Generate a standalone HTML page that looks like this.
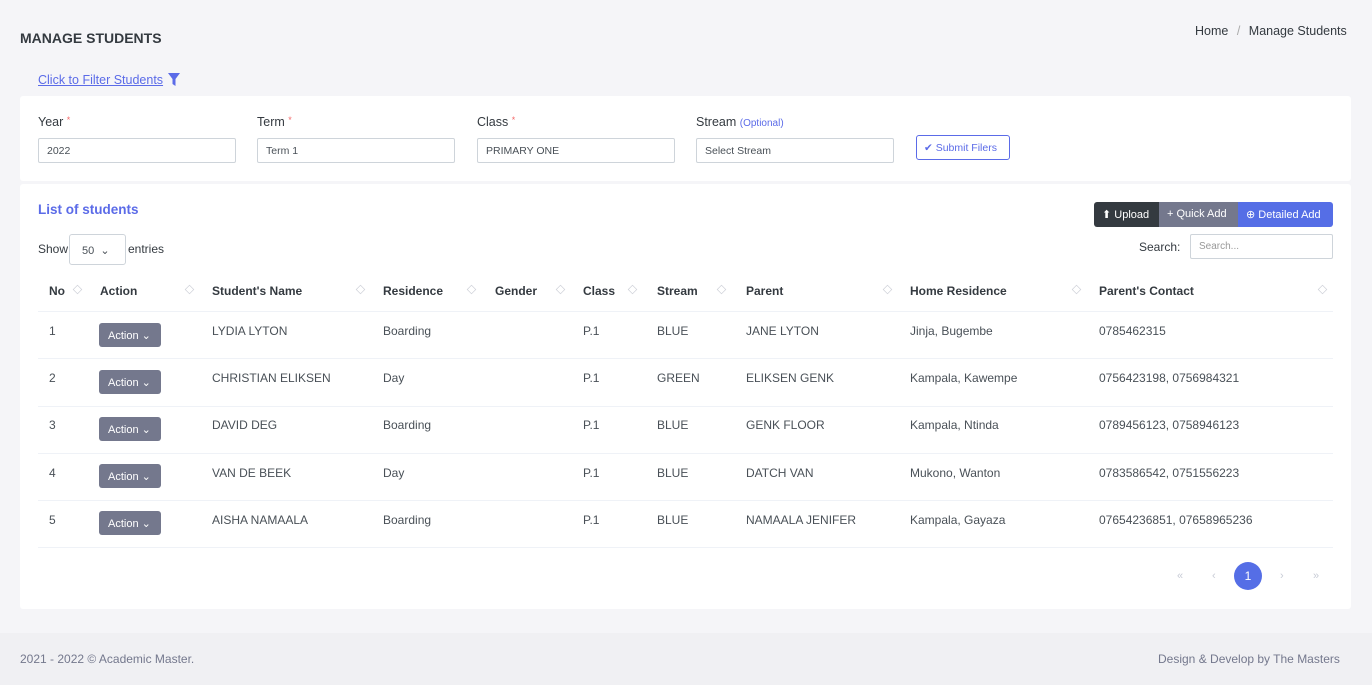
<!DOCTYPE html>
<html><head><meta charset="utf-8"><style>
*{box-sizing:border-box;margin:0;padding:0}
body{width:1372px;height:685px;background:#f5f5f8;font-family:"Liberation Sans",sans-serif;color:#495057;position:relative;overflow:hidden;font-size:12px}
.a{position:absolute;white-space:nowrap}
.card{position:absolute;background:#fff;border-radius:3px}
.inp{position:absolute;height:25px;border:1px solid #ced4da;border-radius:2px;font-size:10.5px;padding:6px 8px;color:#495057;background:#fff}
.lbl{position:absolute;font-size:12.5px;color:#343a40}
.lbl i{color:#f46a6a;font-style:normal;font-size:9px;vertical-align:top}
.th{position:absolute;top:284px;font-weight:bold;font-size:12px;color:#343a40}
.s{position:absolute;top:285px;width:9px;height:9px;border:1.5px solid #d0d3da;transform:rotate(45deg) scale(.75)}
.line{position:absolute;left:38px;width:1295px;height:1px;background:#eff2f7}
.td{position:absolute;font-size:12px;color:#495057}
.btn{position:absolute;left:99px;width:62px;height:24px;background:#74788d;color:#fff;border-radius:3px;font-size:11px;padding:6px 0 0 9px}
</style></head><body>
<div class="a" style="left:20px;top:30px;font-size:14px;font-weight:bold;color:#343a40">MANAGE STUDENTS</div>
<div class="a" style="left:1195px;top:24px;font-size:12.5px;color:#343a40">Home <span style="color:#aaa;margin:0 5px">/</span> Manage Students</div>
<div class="a" style="left:38px;top:73px;font-size:12.5px;color:#5b6be8;text-decoration:underline">Click to Filter Students</div>
<svg class="a" style="left:168px;top:73px" width="12" height="13" viewBox="0 0 12 13"><path d="M0 0H12L7.5 6V13L4.5 11V6Z" fill="#5b6be8"/></svg>
<div class="card" style="left:20px;top:96px;width:1331px;height:85px"></div>
<div class="lbl" style="left:38px;top:115px">Year <i>*</i></div>
<div class="lbl" style="left:257px;top:115px">Term <i>*</i></div>
<div class="lbl" style="left:477px;top:115px">Class <i>*</i></div>
<div class="lbl" style="left:696px;top:115px">Stream <span style="color:#5b6be8;font-size:10px">(Optional)</span></div>
<div class="inp" style="left:38px;top:138px;width:198px">2022</div>
<div class="inp" style="left:257px;top:138px;width:198px">Term 1</div>
<div class="inp" style="left:477px;top:138px;width:198px">PRIMARY ONE</div>
<div class="inp" style="left:696px;top:138px;width:198px">Select Stream</div>
<div class="a" style="left:916px;top:135px;width:94px;height:25px;border:1px solid #5b6be8;border-radius:3px;color:#5b6be8;font-size:10.5px;padding:6px 0 0 7px">✔ Submit Filers</div>
<div class="card" style="left:20px;top:184px;width:1331px;height:425px"></div>
<div class="a" style="left:38px;top:202px;font-size:13.5px;font-weight:bold;color:#5b6be8">List of students</div>
<div class="a" style="left:1094px;top:202px;height:25px;display:flex;font-size:11px;color:#fff;border-radius:3px;overflow:hidden">
<div style="background:#343a40;width:65px;padding:6px 0 0 8px">⬆ Upload</div>
<div style="background:#74788d;width:79px;padding:6px 0 0 8px">+ Quick Add</div>
<div style="background:#556ee6;width:95px;padding:6px 0 0 8px">⊕ Detailed Add</div></div>
<div class="a" style="left:1139px;top:240px;font-size:12px;color:#343a40">Search:</div>
<div class="inp" style="left:1190px;top:234px;width:143px;height:25px;color:#999;font-size:10px">Search...</div>
<div class="a" style="left:38px;top:242px;font-size:12px;color:#343a40">Show</div>
<div class="a" style="left:69px;top:234px;width:57px;height:31px;border:1px solid #ced4da;border-radius:3px;font-size:11px;padding:9px 0 0 12px">50 &nbsp;⌄</div>
<div class="a" style="left:128px;top:242px;font-size:12px;color:#343a40">entries</div>
<div class="th" style="left:49px">No</div><div class="s" style="left:73px"></div>
<div class="th" style="left:100px">Action</div><div class="s" style="left:185px"></div>
<div class="th" style="left:212px">Student's Name</div><div class="s" style="left:356px"></div>
<div class="th" style="left:383px">Residence</div><div class="s" style="left:467px"></div>
<div class="th" style="left:495px">Gender</div><div class="s" style="left:556px"></div>
<div class="th" style="left:583px">Class</div><div class="s" style="left:628px"></div>
<div class="th" style="left:657px">Stream</div><div class="s" style="left:717px"></div>
<div class="th" style="left:746px">Parent</div><div class="s" style="left:883px"></div>
<div class="th" style="left:910px">Home Residence</div><div class="s" style="left:1072px"></div>
<div class="th" style="left:1099px">Parent's Contact</div><div class="s" style="left:1318px"></div>
<div class="line" style="top:311px"></div>
<div class="line" style="top:358px"></div>
<div class="line" style="top:406px"></div>
<div class="line" style="top:453px"></div>
<div class="line" style="top:500px"></div>
<div class="line" style="top:547px"></div>

<div class="td" style="left:49px;top:324px">1</div><div class="btn" style="top:323px">Action ⌄</div><div class="td" style="left:212px;top:324px">LYDIA LYTON</div><div class="td" style="left:383px;top:324px">Boarding</div><div class="td" style="left:583px;top:324px">P.1</div><div class="td" style="left:657px;top:324px">BLUE</div><div class="td" style="left:746px;top:324px">JANE LYTON</div><div class="td" style="left:910px;top:324px">Jinja, Bugembe</div><div class="td" style="left:1099px;top:324px">0785462315</div>
<div class="td" style="left:49px;top:371px">2</div><div class="btn" style="top:370px">Action ⌄</div><div class="td" style="left:212px;top:371px">CHRISTIAN ELIKSEN</div><div class="td" style="left:383px;top:371px">Day</div><div class="td" style="left:583px;top:371px">P.1</div><div class="td" style="left:657px;top:371px">GREEN</div><div class="td" style="left:746px;top:371px">ELIKSEN GENK</div><div class="td" style="left:910px;top:371px">Kampala, Kawempe</div><div class="td" style="left:1099px;top:371px">0756423198, 0756984321</div>
<div class="td" style="left:49px;top:418px">3</div><div class="btn" style="top:417px">Action ⌄</div><div class="td" style="left:212px;top:418px">DAVID DEG</div><div class="td" style="left:383px;top:418px">Boarding</div><div class="td" style="left:583px;top:418px">P.1</div><div class="td" style="left:657px;top:418px">BLUE</div><div class="td" style="left:746px;top:418px">GENK FLOOR</div><div class="td" style="left:910px;top:418px">Kampala, Ntinda</div><div class="td" style="left:1099px;top:418px">0789456123, 0758946123</div>
<div class="td" style="left:49px;top:466px">4</div><div class="btn" style="top:464px">Action ⌄</div><div class="td" style="left:212px;top:466px">VAN DE BEEK</div><div class="td" style="left:383px;top:466px">Day</div><div class="td" style="left:583px;top:466px">P.1</div><div class="td" style="left:657px;top:466px">BLUE</div><div class="td" style="left:746px;top:466px">DATCH VAN</div><div class="td" style="left:910px;top:466px">Mukono, Wanton</div><div class="td" style="left:1099px;top:466px">0783586542, 0751556223</div>
<div class="td" style="left:49px;top:513px">5</div><div class="btn" style="top:511px">Action ⌄</div><div class="td" style="left:212px;top:513px">AISHA NAMAALA</div><div class="td" style="left:383px;top:513px">Boarding</div><div class="td" style="left:583px;top:513px">P.1</div><div class="td" style="left:657px;top:513px">BLUE</div><div class="td" style="left:746px;top:513px">NAMAALA JENIFER</div><div class="td" style="left:910px;top:513px">Kampala, Gayaza</div><div class="td" style="left:1099px;top:513px">07654236851, 07658965236</div>

<div class="a" style="left:1177px;top:570px;color:#c8ccd6;font-size:11px">«</div>
<div class="a" style="left:1212px;top:570px;color:#c8ccd6;font-size:11px">‹</div>
<div class="a" style="left:1234px;top:562px;width:28px;height:28px;border-radius:50%;background:#556ee6;color:#fff;text-align:center;line-height:28px;font-size:12px">1</div>
<div class="a" style="left:1280px;top:570px;color:#c8ccd6;font-size:11px">›</div>
<div class="a" style="left:1313px;top:570px;color:#c8ccd6;font-size:11px">»</div>
<div class="a" style="left:0;top:633px;width:1372px;height:52px;background:#f0f0f3"></div>
<div class="a" style="left:20px;top:652px;font-size:12px;color:#74788d">2021 - 2022 © Academic Master.</div>
<div class="a" style="left:1158px;top:652px;font-size:12px;color:#74788d">Design &amp; Develop by The Masters</div>
</body></html>
